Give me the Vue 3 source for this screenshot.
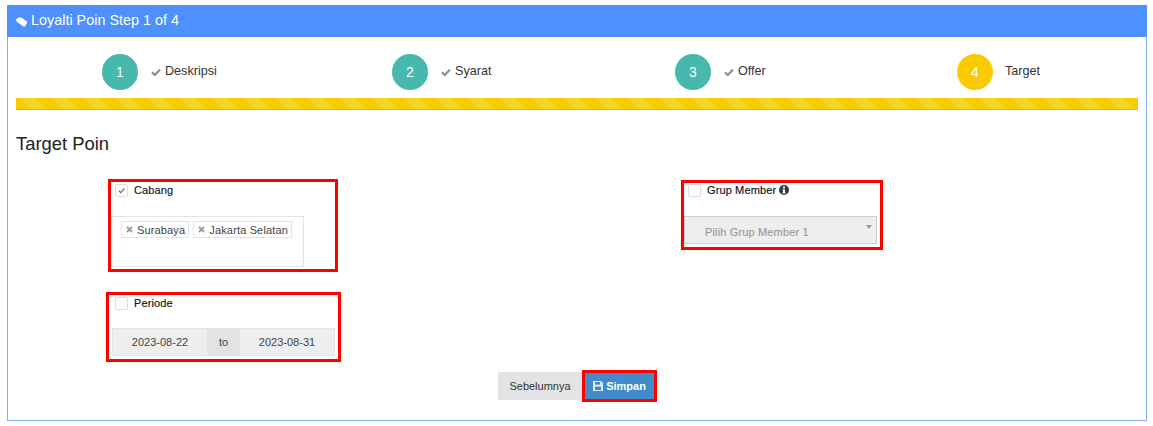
<template>
  <div class="page">
    <div class="panel">
      <div class="panel-head">
        <svg class="tag" viewBox="0 0 12 10"><path d="M0 2.5 2.5 0.5 5.5 0.5 11.5 5 9 9.5 7.5 9.5 0.5 4.5z" fill="#fff" /></svg>
        Loyalti Poin Step 1 of 4
      </div>
      <div class="panel-body">
        <div class="steps">
          <div v-for="s in steps" :key="s.no" class="step">
            <span class="circle" :class="{ active: s.active }">{{ s.no }}</span>
            <svg v-if="!s.active" class="check" viewBox="0 0 10 8"><path d="M1 4.2 3.8 7 9 1.6" fill="none" stroke="#8f8f8f" stroke-width="2.2" /></svg>
            <span class="step-label" :class="{ plain: s.active }">{{ s.label }}</span>
          </div>
        </div>
        <div class="bar"></div>
        <h3 class="title">Target Poin</h3>

        <div class="form-row">
          <div class="col-left">
            <div class="box box-cabang">
              <label class="check-row">
                <span class="cb">
                  <svg viewBox="0 0 12 12"><path d="M3 6.2 5.2 8.4 9.2 3.8" fill="none" stroke="#666" stroke-width="1.3" /></svg>
                </span>
                Cabang
              </label>
              <div class="tags">
                <span v-for="t in cabang" :key="t" class="chip">
                  <svg class="x" viewBox="0 0 7 7"><path d="M1 1 6 6M6 1 1 6" stroke="#999" stroke-width="1.8" /></svg>
                  {{ t }}
                </span>
              </div>
            </div>
            <div class="box box-periode">
              <label class="check-row">
                <span class="cb"></span>
                Periode
              </label>
              <div class="range">
                <span class="date">2023-08-22</span>
                <span class="to">to</span>
                <span class="date">2023-08-31</span>
              </div>
            </div>
          </div>
          <div class="col-right">
            <div class="box box-grup">
              <label class="check-row">
                <span class="cb"></span>
                Grup Member
                <svg class="info" viewBox="0 0 10 10">
                  <circle cx="5" cy="5" r="5" fill="#2b3a4a" />
                  <rect x="4" y="1.5" width="2" height="1.7" fill="#fff" />
                  <path d="M3.4 4.2H6v3.2h.7v1H3.4v-1H4V5.2h-.6z" fill="#fff" />
                </svg>
              </label>
              <div class="select">
                Pilih Grup Member 1
                <span class="caret"></span>
              </div>
            </div>
          </div>
        </div>

        <div class="actions">
          <button class="btn btn-prev">Sebelumnya</button>
          <span class="btn-mark">
            <button class="btn btn-save">
              <svg class="save" viewBox="0 0 10 10">
                <path d="M0 0h8l2 2v8H0z" fill="#dfe9f5" />
                <rect x="2" y="1" width="5" height="2.6" fill="#428bca" />
                <rect x="2" y="5.6" width="6" height="3.4" fill="#428bca" />
              </svg>
              Simpan
            </button>
          </span>
        </div>
      </div>
    </div>
  </div>
</template>

<script setup>
const steps = [
  { no: 1, label: "Deskripsi" },
  { no: 2, label: "Syarat" },
  { no: 3, label: "Offer" },
  { no: 4, label: "Target", active: true },
];

const cabang = ["Surabaya", "Jakarta Selatan"];
</script>

<style>
html,
body {
  background: #fff;
}
</style>

<style scoped>
.page {
  padding: 5px 6px 5px 7px;
  font-family: "Liberation Sans", Arial, sans-serif;
  color: #333;
}

.panel {
  border: 1px solid #7fb0f5;
  border-top: 0;
  height: 416px;
  box-sizing: border-box;
}

.panel-head {
  margin: 0 -1px;
  height: 32px;
  padding: 0 0 2px 9px;
  box-sizing: border-box;
  display: flex;
  align-items: center;
  gap: 3px;
  background: #4d90fe;
  color: #fff;
  font-size: 14.4px;
}

.tag {
  width: 12px;
  height: 10px;
  margin-top: 3px;
}

.panel-body {
  padding: 0 8px;
}

.steps {
  display: grid;
  grid-template-columns: 290px 283px 282px 267px;
  padding-top: 17px;
  height: 61px;
  box-sizing: border-box;
}

.step {
  display: flex;
  align-items: center;
  padding-left: 86px;
  height: 36px;
}

.circle {
  width: 36px;
  height: 36px;
  border-radius: 50%;
  background: #47b8ae;
  color: #fff;
  font-size: 14px;
  display: flex;
  align-items: center;
  justify-content: center;
  flex: none;
}

.circle.active {
  background: #f9cb00;
}

.check {
  width: 10px;
  height: 8px;
  margin-left: 13px;
  margin-right: 4px;
}

.step-label {
  font-size: 12.6px;
  padding-bottom: 2px;
}

.step-label.plain {
  margin-left: 12px;
}

.bar {
  height: 12px;
  box-sizing: border-box;
  border-bottom: 1px solid #e0b800;
  background-color: #f9cb00;
  background-image: linear-gradient(
    45deg,
    rgba(255, 255, 255, 0.15) 25%,
    transparent 25%,
    transparent 50%,
    rgba(255, 255, 255, 0.15) 50%,
    rgba(255, 255, 255, 0.15) 75%,
    transparent 75%
  );
  background-size: 32px 32px;
  background-position: 3px 0;
}

.title {
  margin: 24px 0 0;
  font-size: 18.4px;
  font-weight: normal;
  line-height: 20px;
  color: #222;
}

.form-row {
  display: flex;
  margin-top: 25px;
}

.col-left {
  width: 665px;
  flex: none;
}

.box {
  border: 3px solid #f00;
  box-sizing: border-box;
}

.box-cabang {
  margin-left: 92px;
  width: 230px;
  height: 93px;
}

.box-periode {
  margin-left: 90px;
  margin-top: 20px;
  width: 235px;
  height: 70px;
}

.box-grup {
  margin-top: 1px;
  width: 202px;
  height: 70px;
}

.check-row {
  display: flex;
  align-items: flex-start;
  gap: 6px;
  height: 14px;
  margin-top: 2px;
  padding-left: 4px;
  font-size: 11px;
  line-height: 12px;
  letter-spacing: 0.12px;
  -webkit-text-stroke: 0.15px #111;
  color: #111;
}

.box-grup .check-row {
  margin-top: 1px;
}

.cb {
  width: 13px;
  height: 13px;
  border: 1px solid #ddd;
  border-radius: 2px;
  box-sizing: border-box;
  flex: none;
}

.cb svg {
  display: block;
  width: 11px;
  height: 11px;
}

.box-periode .check-row {
  padding-left: 6px;
}

.tags {
  margin: 18px 0 0;
  width: 193px;
  height: 51px;
  border: 1px solid #e4e4e4;
  box-sizing: border-box;
  padding: 4px 9px;
  display: flex;
  gap: 4px;
  align-items: flex-start;
}

.chip {
  display: flex;
  align-items: center;
  gap: 4px;
  height: 17px;
  box-sizing: border-box;
  padding: 0 3px 0 4px;
  border: 1px solid #e4e4e4;
  font-size: 11px;
  letter-spacing: 0.15px;
  color: #444;
  white-space: nowrap;
}

.x {
  width: 7px;
  height: 7px;
  flex: none;
}

.range {
  margin: 17px 0 0 3px;
  display: flex;
  width: 223px;
  height: 28px;
  border: 1px solid #e4e4e4;
  box-sizing: border-box;
  background: #eee;
  font-size: 11px;
  color: #444;
}

.date {
  flex: 1;
  display: flex;
  align-items: center;
  justify-content: center;
}

.to {
  width: 33px;
  flex: none;
  background: #e3e3e3;
  display: flex;
  align-items: center;
  justify-content: center;
}

.info {
  width: 10px;
  height: 10px;
  margin: 1px 0 0 -3px;
}

.select {
  position: relative;
  margin: 18px 0 0;
  height: 28px;
  width: 193px;
  border: 1px solid #ccc;
  box-sizing: border-box;
  background: #eee;
  color: #999;
  font-size: 11px;
  letter-spacing: 0.15px;
  -webkit-text-stroke: 0.15px #999;
  line-height: 30px;
  padding-left: 20px;
}

.caret {
  position: absolute;
  top: 8px;
  right: 4px;
  border-left: 3px solid transparent;
  border-right: 3px solid transparent;
  border-top: 4px solid #999;
}

.actions {
  display: flex;
  justify-content: center;
  align-items: center;
  margin-top: 8px;
  padding-left: 1px;
}

.btn {
  border: 0;
  height: 28px;
  font-family: inherit;
  font-size: 11px;
  padding: 0;
}

.btn-prev {
  width: 84px;
  background: #e3e3e3;
  color: #333;
}

.btn-mark {
  border: 3px solid #f00;
  display: block;
  height: 32px;
  box-sizing: border-box;
  width: 75px;
}

.btn-save {
  width: 69px;
  height: 26px;
  background: #428bca;
  color: #fff;
  font-weight: bold;
  display: flex;
  align-items: center;
  justify-content: center;
  gap: 3px;
}

.save {
  width: 10px;
  height: 10px;
}
</style>
